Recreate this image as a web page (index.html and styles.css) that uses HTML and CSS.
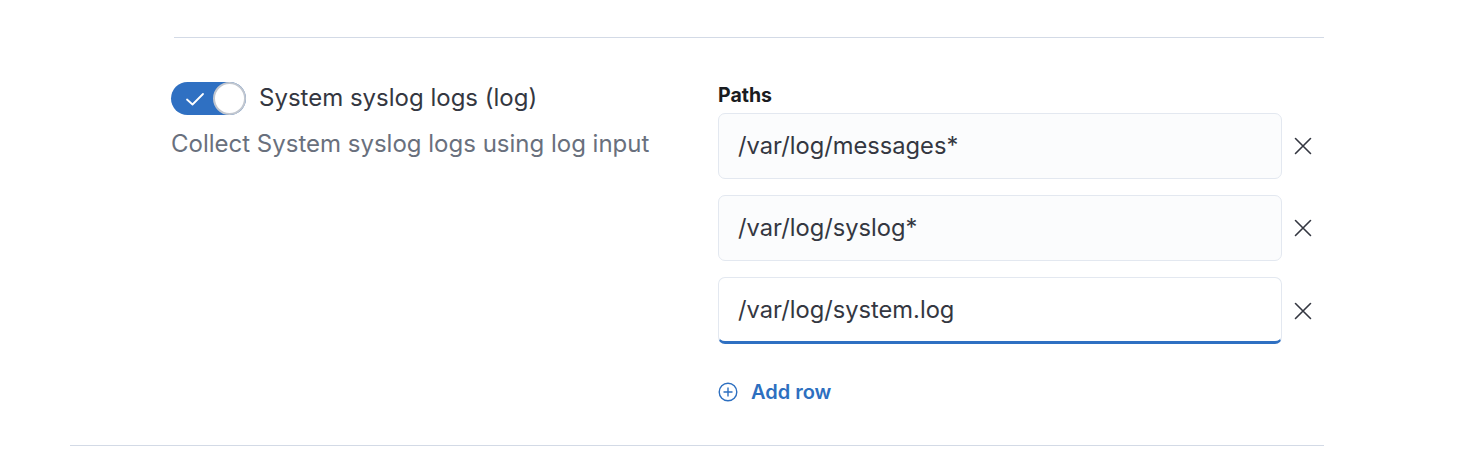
FILE: index.html
```html
<!DOCTYPE html>
<html>
<head>
<meta charset="utf-8">
<link rel="stylesheet" href="styles.css">
</head>
<body>
<div class="page">
  <div class="rule rule-top"></div>
  <div class="section">
    <div class="left">
      <div class="switch-row">
        <span class="switch">
          <svg class="check" width="20" height="16" viewBox="0 0 20 16"><path d="M2 8.5 L7.5 13.5 L18 3" fill="none" stroke="#fff" stroke-width="1.8" stroke-linecap="round" stroke-linejoin="round"/></svg>
          <span class="knob"></span>
        </span>
        <span class="switch-label">System syslog logs (log)</span>
      </div>
      <div class="desc">Collect System syslog logs using log input</div>
    </div>
    <div class="right">
      <div class="field-label">Paths</div>
      <div class="rows">
        <div class="row">
          <div class="input">/var/log/messages*</div>
          <button class="clear" aria-label="Delete"><svg width="18" height="18" viewBox="0 0 18 18"><path d="M1.5 1.5 L16.5 16.5 M16.5 1.5 L1.5 16.5" stroke="#343741" stroke-width="1.6" stroke-linecap="round"/></svg></button>
        </div>
        <div class="row">
          <div class="input">/var/log/syslog*</div>
          <button class="clear" aria-label="Delete"><svg width="18" height="18" viewBox="0 0 18 18"><path d="M1.5 1.5 L16.5 16.5 M16.5 1.5 L1.5 16.5" stroke="#343741" stroke-width="1.6" stroke-linecap="round"/></svg></button>
        </div>
        <div class="row">
          <div class="input input-focus">/var/log/system.log</div>
          <button class="clear" aria-label="Delete"><svg width="18" height="18" viewBox="0 0 18 18"><path d="M1.5 1.5 L16.5 16.5 M16.5 1.5 L1.5 16.5" stroke="#343741" stroke-width="1.6" stroke-linecap="round"/></svg></button>
        </div>
      </div>
      <button class="add-row">
        <svg width="20" height="20" viewBox="0 0 20 20"><circle cx="10" cy="10" r="8.8" fill="none" stroke="#2d6fc0" stroke-width="1.4"/><path d="M10 5.5 V14.5 M5.5 10 H14.5" stroke="#2d6fc0" stroke-width="1.4"/></svg>
        <span>Add row</span>
      </button>
    </div>
  </div>
  <div class="rule rule-bottom"></div>
</div>
</body>
</html>
```

FILE: styles.css
```css
* { box-sizing: border-box; }
html, body { margin: 0; padding: 0; background: #fff; }
body { font-family: Inter, "Noto Sans", "Liberation Sans", sans-serif; color: #343741; }

.page { padding-top: 37px; }

.rule { height: 1px; background: #d3dae6; }
.rule-top { margin-left: 174px; width: 1150px; }
.rule-bottom { margin-left: 70px; width: 1254px; margin-top: 33px; }

.section { display: flex; padding-left: 171px; padding-top: 43px; }
.left { width: 547px; flex: none; }
.right { width: 606px; flex: none; }

.switch-row { display: flex; align-items: center; gap: 13px; height: 34px; }
.switch {
  position: relative;
  width: 75px; height: 33px;
  border-radius: 17px;
  background: #2f70c2;
  display: block;
  flex: none;
}
.check { position: absolute; left: 14px; top: 9px; }
.knob {
  position: absolute; right: 0; top: 0;
  width: 33px; height: 33px; border-radius: 50%;
  background: #fff;
  border: 2px solid #c2c7cf;
}
.switch-label { font-size: 24px; color: #343741; line-height: 34px; }
.desc { font-size: 24px; color: #69707d; margin-top: 14px; line-height: 30px; }

.field-label { font-size: 19.5px; font-weight: 700; color: #1a1c21; line-height: 24px; height: 32px; padding-top: 2px; }

.rows { display: flex; flex-direction: column; gap: 16px; }
.row { display: flex; align-items: center; }
.input {
  width: 564px; height: 66px;
  border: 1.5px solid #e3e8f0;
  border-radius: 7px;
  background: #fbfcfd;
  font-size: 23.7px; color: #343741;
  display: flex; align-items: center;
  padding-left: 19px;
  padding-bottom: 2px;
}
.input-focus {
  background: #fff;
  border-bottom: 3px solid #2f70c2;
  padding-top: 2px;
  height: 67px;
}
.clear {
  width: 42px; height: 42px;
  border: 0; background: transparent; padding: 0;
  display: flex; align-items: center; justify-content: center;
}

.add-row {
  margin-top: 28px;
  height: 40px;
  border: 0; background: transparent; padding: 0;
  display: flex; align-items: center; gap: 13px;
  font-family: inherit; font-size: 20px; font-weight: 600; color: #2d6fc0;
}
.add-row span { line-height: 40px; }
```
